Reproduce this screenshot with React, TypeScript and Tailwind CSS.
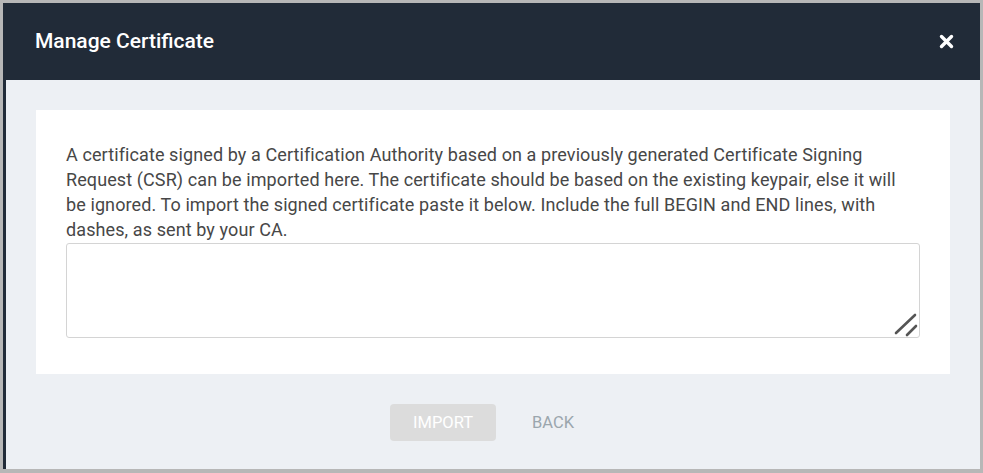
import React from "react";

export default function App() {
  return (
    <div
      className="w-[983px] h-[473px] bg-[#b7b7b7] pt-[3px] pl-[3px] pr-[3px] pb-[4px]"
      style={{ fontFamily: "Roboto, 'Liberation Sans', sans-serif" }}
    >
      <div className="flex h-full flex-col">
        <div className="flex h-[77px] shrink-0 items-center justify-between bg-[#212b38] pl-[32px] pr-[26px]">
          <h1 className="text-[21px] font-medium text-white">Manage Certificate</h1>
          <button className="flex h-[16px] w-[16px] items-center justify-center">
            <svg width="15" height="15" viewBox="0 0 15 15">
              <path d="M2.5 2.5 L12.5 12.5 M12.5 2.5 L2.5 12.5" stroke="#ffffff" strokeWidth="3.4" strokeLinecap="round" />
            </svg>
          </button>
        </div>
        <div className="flex flex-1 flex-col border-l-[3px] border-[#212b38] bg-[#edf0f4] pt-[30px]">
          <div className="mx-[30px] bg-white pl-[30px] pr-[30px] pt-[32px] pb-[36px]">
            <p className="whitespace-nowrap text-[18px] leading-[25px] tracking-[0.1px] text-[#474747]">
              A certificate signed by a Certification Authority based on a previously generated Certificate Signing
              <br />
              Request (CSR) can be imported here. The certificate should be based on the existing keypair, else it will
              <br />
              be ignored. To import the signed certificate paste it below. Include the full BEGIN and END lines, with
              <br />
              dashes, as sent by your CA.
            </p>
            <div className="relative mt-px">
              <textarea className="block h-[95px] w-full resize-none rounded-[3px] border border-[#d4d4d4] bg-white outline-none" />
              <svg className="absolute bottom-0 right-[1px]" width="26" height="26" viewBox="0 0 26 26">
                <path d="M3 21 L22 3 M14 23 L23 14" stroke="#555555" strokeWidth="2.6" strokeLinecap="round" />
              </svg>
            </div>
          </div>
          <div className="mt-[30px] flex justify-center gap-[4px] pl-[10px]">
            <button className="h-[37px] w-[106px] rounded-[4px] bg-[#dcdcdc] pt-px text-[16.5px] text-white">IMPORT</button>
            <button className="h-[37px] w-[106px] pt-px text-[16.5px] text-[#9ba6ad]">BACK</button>
          </div>
        </div>
      </div>
    </div>
  );
}
